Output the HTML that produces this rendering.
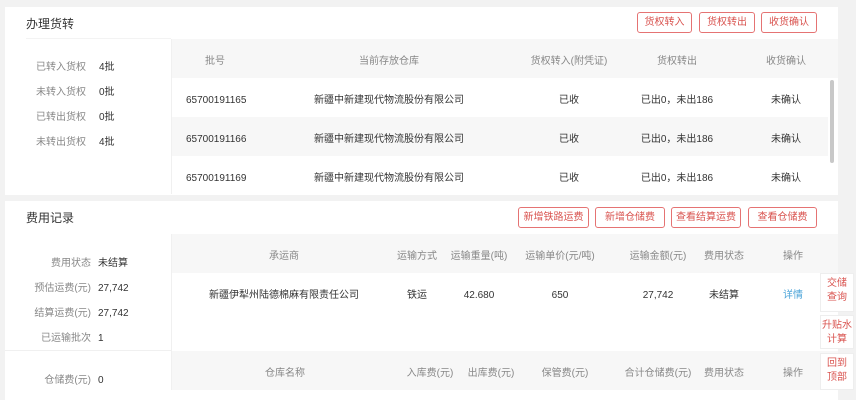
<!DOCTYPE html>
<html><head><meta charset="utf-8"><style>
*{margin:0;padding:0;box-sizing:border-box}
body{width:856px;height:400px;background:#f2f2f2;position:relative;overflow:hidden;font-family:"Liberation Sans","Noto Sans CJK SC",sans-serif;font-size:10px;color:#333}
.a{position:absolute;white-space:nowrap;line-height:12px;height:12px;margin-top:3px}
.ln{position:absolute}
.card{position:absolute;background:#fff}
.g{background:#f7f7f7;position:absolute}
.h{color:#888}
.c{transform:translateX(-50%)}
.r{transform:translateX(-100%)}
.btn{position:absolute;border:1px solid #e57373;border-radius:3px;color:#d9534f;text-align:center;font-size:10px;line-height:19px;height:21px;background:#fff}
.side{position:absolute;left:820px;width:34px;background:#fff;border:1px solid #eee;color:#d9534f;font-size:10px;text-align:center;line-height:14px;padding-top:3px}
</style></head><body>
<div class="card" style="left:5px;top:7px;width:833px;height:188px"></div>
<div class="card" style="left:5px;top:201px;width:833px;height:199px"></div>

<div class="a" style="left:26px;top:17px;margin-top:0;font-size:12px;line-height:14px;height:14px">办理货转</div>
<div class="btn" style="left:637px;top:12px;width:55px">货权转入</div>
<div class="btn" style="left:699px;top:12px;width:56px">货权转出</div>
<div class="btn" style="left:761px;top:12px;width:56px">收货确认</div>
<div class="ln" style="left:26px;top:38px;width:145px;height:1px;background:#f3f3f3"></div>
<div class="g" style="left:171px;top:39px;width:667px;height:39px"></div>
<div class="g" style="left:171px;top:117px;width:657px;height:39px"></div>
<div class="ln" style="left:171px;top:39px;width:1px;height:155px;background:#f0f0f0"></div>
<div class="ln" style="left:830px;top:80px;width:4px;height:83px;background:#c8c8c8;border-radius:2px"></div>

<div class="a h" style="left:36px;top:59px">已转入货权</div><div class="a" style="left:99px;top:59px">4批</div>
<div class="a h" style="left:36px;top:84px">未转入货权</div><div class="a" style="left:99px;top:84px">0批</div>
<div class="a h" style="left:36px;top:109px">已转出货权</div><div class="a" style="left:99px;top:109px">0批</div>
<div class="a h" style="left:36px;top:134px">未转出货权</div><div class="a" style="left:99px;top:134px">4批</div>

<div class="a h c" style="left:215px;top:53px">批号</div>
<div class="a h c" style="left:389px;top:53px">当前存放仓库</div>
<div class="a h c" style="left:569px;top:53px">货权转入(附凭证)</div>
<div class="a h c" style="left:677px;top:53px">货权转出</div>
<div class="a h c" style="left:786px;top:53px">收货确认</div>

<div class="a" style="left:186px;top:92px">65700191165</div><div class="a c" style="left:389px;top:92px">新疆中新建现代物流股份有限公司</div><div class="a c" style="left:569px;top:92px">已收</div><div class="a c" style="left:677px;top:92px">已出0，未出186</div><div class="a c" style="left:786px;top:92px">未确认</div>
<div class="a" style="left:186px;top:131px">65700191166</div><div class="a c" style="left:389px;top:131px">新疆中新建现代物流股份有限公司</div><div class="a c" style="left:569px;top:131px">已收</div><div class="a c" style="left:677px;top:131px">已出0，未出186</div><div class="a c" style="left:786px;top:131px">未确认</div>
<div class="a" style="left:186px;top:170px">65700191169</div><div class="a c" style="left:389px;top:170px">新疆中新建现代物流股份有限公司</div><div class="a c" style="left:569px;top:170px">已收</div><div class="a c" style="left:677px;top:170px">已出0，未出186</div><div class="a c" style="left:786px;top:170px">未确认</div>

<div class="a" style="left:26px;top:211px;margin-top:0;font-size:12px;line-height:14px;height:14px">费用记录</div>
<div class="btn" style="left:518px;top:207px;width:71px">新增铁路运费</div>
<div class="btn" style="left:595px;top:207px;width:70px">新增仓储费</div>
<div class="btn" style="left:671px;top:207px;width:70px">查看结算运费</div>
<div class="btn" style="left:748px;top:207px;width:69px">查看仓储费</div>
<div class="g" style="left:171px;top:234px;width:667px;height:39px"></div>
<div class="g" style="left:171px;top:351px;width:667px;height:39px"></div>
<div class="ln" style="left:5px;top:350px;width:166px;height:1px;background:#f0f0f0"></div>
<div class="ln" style="left:171px;top:234px;width:1px;height:156px;background:#f0f0f0"></div>

<div class="a h r" style="left:91px;top:255px">费用状态</div><div class="a" style="left:98px;top:255px">未结算</div>
<div class="a h r" style="left:91px;top:280px">预估运费(元)</div><div class="a" style="left:98px;top:280px">27,742</div>
<div class="a h r" style="left:91px;top:305px">结算运费(元)</div><div class="a" style="left:98px;top:305px">27,742</div>
<div class="a h r" style="left:91px;top:330px">已运输批次</div><div class="a" style="left:98px;top:330px">1</div>
<div class="a h r" style="left:91px;top:372px">仓储费(元)</div><div class="a" style="left:98px;top:372px">0</div>

<div class="a h c" style="left:284px;top:248px">承运商</div>
<div class="a h c" style="left:417px;top:248px">运输方式</div>
<div class="a h c" style="left:479px;top:248px">运输重量(吨)</div>
<div class="a h c" style="left:560px;top:248px">运输单价(元/吨)</div>
<div class="a h c" style="left:658px;top:248px">运输金额(元)</div>
<div class="a h c" style="left:724px;top:248px">费用状态</div>
<div class="a h c" style="left:793px;top:248px">操作</div>

<div class="a c" style="left:284px;top:287px">新疆伊犁州陆德棉麻有限责任公司</div>
<div class="a c" style="left:417px;top:287px">铁运</div>
<div class="a c" style="left:479px;top:287px">42.680</div>
<div class="a c" style="left:560px;top:287px">650</div>
<div class="a c" style="left:658px;top:287px">27,742</div>
<div class="a c" style="left:724px;top:287px">未结算</div>
<div class="a c" style="left:793px;top:287px;color:#4aa3d8">详情</div>

<div class="a h c" style="left:285px;top:365px">仓库名称</div>
<div class="a h c" style="left:430px;top:365px">入库费(元)</div>
<div class="a h c" style="left:491px;top:365px">出库费(元)</div>
<div class="a h c" style="left:565px;top:365px">保管费(元)</div>
<div class="a h c" style="left:658px;top:365px">合计仓储费(元)</div>
<div class="a h c" style="left:724px;top:365px">费用状态</div>
<div class="a h c" style="left:793px;top:365px">操作</div>

<div class="side" style="top:273px;height:39px">交储<br>查询</div>
<div class="side" style="top:315px;height:34px">升贴水<br>计算</div>
<div class="side" style="top:353px;height:37px">回到<br>顶部</div>
</body></html>
